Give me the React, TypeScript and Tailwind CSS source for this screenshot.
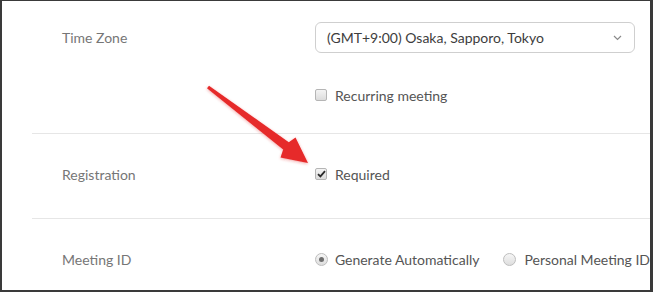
import React from "react";

const FONT = { fontFamily: "Lato, 'Open Sans', sans-serif" };

function Checkbox({ checked }: { checked?: boolean }) {
  return (
    <span className="flex h-[12px] w-[12px] items-center justify-center rounded-[2px] border border-[#b5b5b5] bg-gradient-to-b from-[#f4f4f4] to-[#dcdcdc]">
      {checked && (
        <svg width="9" height="8" viewBox="0 0 9 8">
          <path d="M1 4.2 L3.4 6.4 L8 1.2" fill="none" stroke="#2b2b2b" strokeWidth="1.8" />
        </svg>
      )}
    </span>
  );
}

function Radio({ checked }: { checked?: boolean }) {
  return (
    <span className="flex h-[13px] w-[13px] items-center justify-center rounded-full border border-[#bdbdbd] bg-gradient-to-b from-[#f6f6f6] to-[#dedede]">
      {checked && <span className="h-[5px] w-[5px] rounded-full bg-[#6e6e6e]" />}
    </span>
  );
}

function Label({ children }: { children: React.ReactNode }) {
  return <div className="w-[283px] shrink-0 pl-[30px] text-[14px] text-[#767676]">{children}</div>;
}

export default function App() {
  return (
    <div
      className="relative h-[292px] w-[653px] overflow-hidden border-t border-l-2 border-r-[3px] border-b-2 border-[#3a3a3a] bg-white pl-[30px]"
      style={FONT}
    >
      {/* Time zone */}
      <div className="border-b border-[#e6e6e6] pt-[21px] pb-[28px]">
        <div className="flex items-center">
          <Label>Time Zone</Label>
          <div className="flex h-[31px] w-[320px] items-center justify-between rounded-[6px] border border-[#cfcfcf] pl-[11px] pr-[12px] text-[14px] text-[#3d3d3d]">
            <span>(GMT+9:00) Osaka, Sapporo, Tokyo</span>
            <svg width="9" height="6" viewBox="0 0 9 6">
              <path d="M1 1 L4.5 4.5 L8 1" fill="none" stroke="#8a8a8a" strokeWidth="1.2" />
            </svg>
          </div>
        </div>
        <div className="mt-[32px] flex h-[20px] items-center">
          <div className="w-[283px] shrink-0" />
          <Checkbox />
          <span className="ml-[8px] text-[14px] text-[#555]">Recurring meeting</span>
        </div>
      </div>

      {/* Registration */}
      <div className="border-b border-[#e6e6e6] pt-[30px] pb-[34px]">
        <div className="flex h-[20px] items-center">
          <Label>Registration</Label>
          <Checkbox checked />
          <span className="ml-[8px] text-[14px] text-[#555]">Required</span>
        </div>
      </div>

      {/* Meeting ID */}
      <div className="pt-[30px]">
        <div className="flex h-[20px] items-center whitespace-nowrap">
          <Label>Meeting ID</Label>
          <Radio checked />
          <span className="ml-[7px] text-[14px] text-[#555]">Generate Automatically</span>
          <span className="ml-[24px]">
            <Radio />
          </span>
          <span className="ml-[8px] text-[14px] text-[#555]">Personal Meeting ID</span>
        </div>
      </div>

      {/* Red arrow annotation */}
      <svg className="pointer-events-none absolute left-[-2px] top-[-1px]" width="653" height="292">
        <defs>
          <filter id="glow" x="-20%" y="-20%" width="140%" height="140%">
            <feDropShadow dx="0" dy="1" stdDeviation="1.4" floodColor="#e02020" floodOpacity="0.4" />
          </filter>
        </defs>
        <polygon
          points="209,85.8 288.8,142.2 295.5,137.5 308,163 280.5,157.5 283.2,149.6 207,88.2"
          fill="#e62a2a"
          filter="url(#glow)"
        />
      </svg>
    </div>
  );
}
